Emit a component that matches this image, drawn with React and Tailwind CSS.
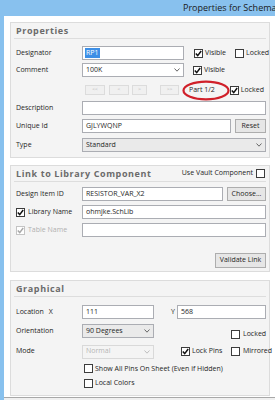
import clsx from 'clsx'

const FONT = { fontFamily: '"Open Sans", "Noto Sans", sans-serif' }

function Check({ checked, disabled }) {
  return (
    <span
      className={clsx(
        'w-[9px] h-[9px] shrink-0 border bg-white flex items-center justify-center',
        disabled ? 'border-[#c4c4c4]' : 'border-[#3c3c3c]'
      )}
    >
      {checked && (
        <svg width="7" height="7" viewBox="0 0 7 7">
          <path d="M0.8 3.6 L2.7 5.6 L6.2 1" fill="none" stroke={disabled ? '#a8a8a8' : '#111'} strokeWidth="1.5" />
        </svg>
      )}
    </span>
  )
}

function Chevron({ color = '#666' }) {
  return (
    <svg width="6" height="4" viewBox="0 0 6 4">
      <path d="M0.5 0.5 L3 3.2 L5.5 0.5" fill="none" stroke={color} strokeWidth="1" />
    </svg>
  )
}

function Input({ className, children }) {
  return (
    <div className={clsx('h-[14px] shrink-0 border border-[#abadb3] bg-white flex items-center px-[3px] text-[7px] text-[#1e1e1e] whitespace-nowrap', className)}>
      {children}
    </div>
  )
}

function Select({ className, children, disabled }) {
  return (
    <div
      className={clsx(
        'h-[14px] shrink-0 border flex items-center justify-between px-[3px] text-[7px] whitespace-nowrap',
        disabled ? 'border-[#d9d9d9] bg-[#f4f4f4] text-[#b4b4b4]' : 'border-[#abadb3] bg-[#eaeaea] text-[#1e1e1e]',
        className
      )}
    >
      <span>{children}</span>
      <Chevron color={disabled ? '#bdbdbd' : '#666'} />
    </div>
  )
}

function Button({ className, children }) {
  return (
    <div className={clsx('h-[14px] shrink-0 border border-[#adadad] bg-[#e6e6e6] flex items-center justify-center text-[7px] text-[#1e1e1e] whitespace-nowrap', className)}>
      {children}
    </div>
  )
}

function NavBtn({ className, children }) {
  return (
    <div className={clsx('h-[10px] shrink-0 border border-[#dcdcdc] bg-[#f0f0f0] flex items-center justify-center text-[5px] text-[#b8b8b8]', className)}>
      {children}
    </div>
  )
}

function Header({ children, right }) {
  return (
    <div className="h-[16px] border-b border-[#dddddd] -ml-[2px] pl-[2px] flex items-center justify-between">
      <span className="text-[9px] font-bold tracking-[0.6px] text-[#6b6b6b]">{children}</span>
      {right}
    </div>
  )
}

function Label({ children, className }) {
  return <span className={clsx('w-[66px] shrink-0 text-[7px] text-[#1e1e1e] whitespace-nowrap', className)}>{children}</span>
}

function CheckText({ checked, disabled, className, children }) {
  return (
    <span className={clsx('shrink-0 flex items-center gap-[2px] whitespace-nowrap', className)}>
      <Check checked={checked} disabled={disabled} />
      <span className={clsx('text-[7px]', disabled ? 'text-[#b0b0b0]' : 'text-[#1e1e1e]')}>{children}</span>
    </span>
  )
}

function Box({ className, children }) {
  return <div className={clsx('ml-[6px] w-[260px] border border-[#dcdcdc] bg-[#f4f4f4] pl-[5px] pr-[3px]', className)}>{children}</div>
}

export default function App() {
  return (
    <div className="w-[275px] h-[400px] bg-[#88c1ee] flex flex-col overflow-hidden" style={FONT}>
      <div className="h-[16px] shrink-0 pl-[183px] flex items-center text-[9px] text-[#1a1a1a] whitespace-nowrap overflow-hidden">
        Properties for Schematic Component
      </div>
      <div className="ml-[4px] flex-1 bg-white flex flex-col">
        <Box className="mt-[6px] pb-[5px]">
          <Header>Properties</Header>
          <div className="mt-[7px] flex items-center">
            <Label>Designator</Label>
            <Input className="w-[102px]">
              <span className="bg-[#3d8fe6] text-white px-[1px] -ml-[1px]">RP1</span>
            </Input>
            <CheckText checked className="ml-[10px]">Visible</CheckText>
            <CheckText className="ml-[9px]">Locked</CheckText>
          </div>
          <div className="mt-[3px] flex items-center">
            <Label>Comment</Label>
            <Select className="w-[102px] !bg-white">100K</Select>
            <CheckText checked className="ml-[9px]">Visible</CheckText>
          </div>
          <div className="h-[18px] mt-[4px] flex items-center relative">
            <span className="w-[69px] shrink-0" />
            <NavBtn className="w-[20px]">&lt;&lt;</NavBtn>
            <NavBtn className="w-[20px] ml-[4px]">&lt;</NavBtn>
            <NavBtn className="w-[15px] ml-[3px]">&gt;</NavBtn>
            <NavBtn className="w-[19px] ml-[13px]">&gt;&gt;</NavBtn>
            <span className="ml-[10px] text-[7px] text-[#1e1e1e] whitespace-nowrap">Part 1/2</span>
            <CheckText checked className="ml-[15px]">Locked</CheckText>
            <svg className="absolute left-[165px] top-[-1px]" width="50" height="21" viewBox="0 0 50 21">
              <ellipse cx="25" cy="10.5" rx="22.5" ry="8.8" fill="none" stroke="#d0202a" strokeWidth="2.2" />
            </svg>
          </div>
          <div className="mt-[2px] flex items-center">
            <Label>Description</Label>
            <Input className="w-[184px]" />
          </div>
          <div className="mt-[4px] flex items-center">
            <Label>Unique Id</Label>
            <Input className="w-[149px]">GJLYWQNP</Input>
            <Button className="w-[31px] ml-[4px]">Reset</Button>
          </div>
          <div className="mt-[5px] flex items-center">
            <Label>Type</Label>
            <Select className="w-[184px]">Standard</Select>
          </div>
        </Box>

        <Box className="mt-[7px] pb-[3px]">
          <Header
            right={
              <span className="flex items-center gap-[3px] pr-[1px]">
                <span className="text-[7px] text-[#1e1e1e]">Use Vault Component</span>
                <Check />
              </span>
            }
          >
            Link to Library Component
          </Header>
          <div className="mt-[5px] flex items-center">
            <Label>Design Item ID</Label>
            <Input className="w-[141px]">RESISTOR_VAR_X2</Input>
            <Button className="w-[39px] ml-[4px]">Choose...</Button>
          </div>
          <div className="mt-[4px] flex items-center">
            <CheckText checked className="w-[66px] !gap-[3px]">Library Name</CheckText>
            <Input className="w-[184px]">ohmjke.SchLib</Input>
          </div>
          <div className="mt-[4px] flex items-center">
            <CheckText checked disabled className="w-[66px] !gap-[3px]">Table Name</CheckText>
            <Input className="w-[184px]" />
          </div>
          <div className="mt-[16px] flex justify-end">
            <Button className="w-[51px] h-[15px]">Validate Link</Button>
          </div>
        </Box>

        <Box className="mt-[8px] pb-[6px]">
          <Header>Graphical</Header>
          <div className="mt-[8px] flex items-center">
            <span className="w-[66px] shrink-0 text-[7px] text-[#1e1e1e] whitespace-nowrap">
              Location <span className="ml-[3px]">X</span>
            </span>
            <Input className="w-[72px]">111</Input>
            <span className="ml-[17px] w-[6px] text-[7px] text-[#1e1e1e]">Y</span>
            <Input className="w-[89px]">568</Input>
          </div>
          <div className="mt-[4px] flex items-center">
            <Label>Orientation</Label>
            <Select className="w-[72px]">90 Degrees</Select>
            <CheckText className="ml-[77px] mt-[6px] !gap-[3px]">Locked</CheckText>
          </div>
          <div className="mt-[5px] flex items-center">
            <Label>Mode</Label>
            <Select className="w-[72px]" disabled>Normal</Select>
            <span className="ml-[27px] w-[50px] shrink-0 flex">
              <CheckText checked>Lock Pins</CheckText>
            </span>
            <CheckText className="!gap-[3px]">Mirrored</CheckText>
          </div>
          <CheckText className="mt-[5px] ml-[68px]">Show All Pins On Sheet (Even if Hidden)</CheckText>
          <CheckText className="mt-[4px] ml-[68px]">Local Colors</CheckText>
        </Box>
        <div className="flex-1" />
        <div className="h-[3px] border-t border-[#a8a8a8] bg-[#f0f0f0]" />
      </div>
    </div>
  )
}
